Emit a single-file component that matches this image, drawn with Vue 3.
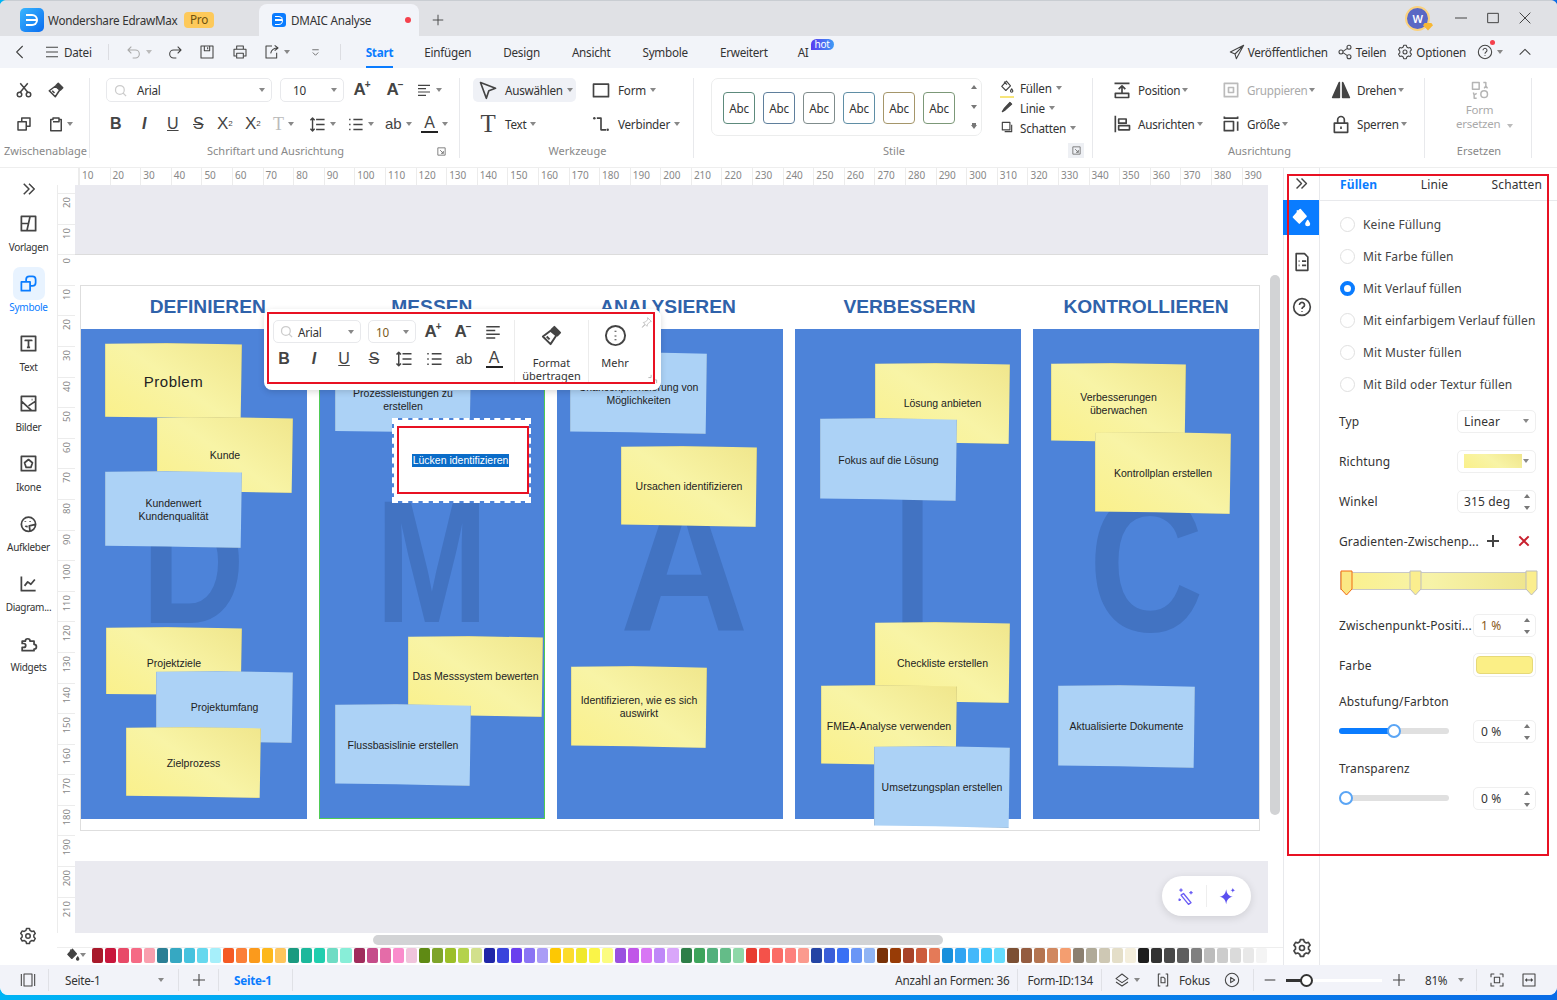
<script setup>
// Pfade für die Icons (viewBox 24x24)
const ic = {
  cut: 'M7 15 17 3M17 15 7 3M3 18a3 3 0 1 0 6 0a3 3 0 1 0-6 0M15 18a3 3 0 1 0 6 0a3 3 0 1 0-6 0',
  copy: 'M4 9h11v11H4zM9 9V4h11v11h-5',
  paste: 'M5 6h3V4h8v2h3v15H5zM8 9h8V6',
  search: 'M4 11a7 7 0 1 0 14 0a7 7 0 1 0-14 0M16 16l5 5',
  align: 'M3 5h18M3 10h12M3 15h18M3 20h12',
  spacing: 'M10 5h12M10 12h12M10 19h12M5 3v18M2 6l3-3 3 3M2 18l3 3 3-3',
  list: 'M9 5h13M9 12h13M9 19h13M3 5h2M3 12h2M3 19h2',
  pointer: 'M3 3l18 7-8 3-3 9z',
  connector: 'M7 5h5v14h6',
  position: 'M3 4h18M12 16V7M8 11l4-4 4 4M4 16h16v5H4z',
  ausrichten: 'M4 2v20M8 6h9v5H8zM8 14h13v5H8z',
  group: 'M4 4h16v16H4zM9 9h6v6H9z',
  size: 'M4 3v2h16V3M4 9h11v11H4zM20 9v11',
  lock: 'M4 11h16v11H4zM8 11V7a4 4 0 0 1 8 0v4M12 15v3',
  send: 'M22 2 2 12l7 3 13-13zM9 15l2 7 11-20',
  share: 'M3 12a3 3 0 1 0 6 0a3 3 0 1 0-6 0M15 5a3 3 0 1 0 6 0a3 3 0 1 0-6 0M15 19a3 3 0 1 0 6 0a3 3 0 1 0-6 0M9 11l6-4M9 13l6 4',
  gear: 'M10 2h4l.7 2.600 2.400 1.400 2.600-.7 2 3.400-1.900 1.900v2.800l1.900 1.900-2 3.400-2.600-.7-2.400 1.400L14 22h-4l-.7-2.600-2.400-1.400-2.600.7-2-3.400 1.900-1.900v-2.800L2.300 8.600l2-3.400 2.600.7 2.400-1.400zM9 12a3 3 0 1 0 6 0a3 3 0 1 0-6 0',
  help: 'M2 12a10 10 0 1 0 20 0a10 10 0 1 0-20 0M9 9.500a3 3 0 1 1 4.500 2.600c-1 .6-1.500 1.200-1.500 2.400M12 17v1',
  brushHead: 'M11 7 3 13l8 8 6-9zM7 13l3 3',
  brushHandle: 'M15 3l6 6-3 3-6-6z',
  more: 'M2 12a10 10 0 1 0 20 0a10 10 0 1 0-20 0M12 7v1M12 12v1M12 16v1',
  double: 'M5 5l7 7-7 7M12 5l7 7-7 7',
  bucket: 'M11 2 3 11l7 7 8-8zM7 3l5 5M20 15c1 2 2 3 2 4a2 2 0 0 1-4 0c0-1 1-2 2-4z',
  doc: 'M5 2h10l4 4v16H5zM8 11h1M12 11h5M8 16h1M12 16h5',
  templates: 'M3 3h18v18H3zM14 3l-4 18M3 12h9',
  symbols: 'M3 10h11v11H3zM9 10V7a4 4 0 0 1 4-4h4a4 4 0 0 1 4 4v4a4 4 0 0 1-4 4h-3',
  textbox: 'M3 3h18v18H3zM8 9V8h8v1M12 8v9M10 17h4',
  image: 'M3 3h18v18H3zM3 9l13 12M12 15l9-6M16 7h1',
  iconbox: 'M3 3h18v18H3zM12 7l5 4-2 6H9l-2-6z',
  sticker: 'M21 13a9 9 0 1 0-9 9c5 0 9-4 9-9zM8 9v1M14 9v1M21 13l-8 2 1 7M8 15c1 1 2 1 3 1',
  chart: 'M3 3v18h18M7 15l4-5 4 3 5-6',
  puzzle: 'M4 9h4a3 3 0 1 1 6 0h5v4a3 3 0 1 1 0 6v2H4v-4h2a2.500 2.500 0 1 0 0-5H4z',
  panel: 'M2 3v18M22 3v18M6 3h12v18H6z',
  layers: 'M12 3l9 7-9 6-9-6zM3 15l9 6 9-6',
  focus: 'M8 3H5v18h3M16 3h3v18h-3M9 8h4l2 2v6H9z',
  play: 'M2 12a10 10 0 1 0 20 0a10 10 0 1 0-20 0M10 8l6 4-6 4z',
  fit: 'M8 3H3v5M16 3h5v5M8 21H3v-5M16 21h5v-5M8 8h8v8H8z',
  fitw: 'M3 3h18v18H3zM7 12h10M9 10l-2 2 2 2M15 10l2 2-2 2',
  undo: 'M8 4 3 9l5 5M3 9h11a6 6 0 0 1 0 12h-4',
  redo: 'M16 4l5 5-5 5M21 9H10a6 6 0 0 0 0 12h4',
  save: 'M3 3h18v18H3zM8 3v7h8V3M13 5v3',
  print: 'M7 8V3h10v5M6 18H3V8h18v10h-3M7 14h10v7H7z',
  exportIc: 'M12 3H3v18h16v-8M10 14c1-5 5-8 11-8M16 2l5 4-5 4',
  qa: 'M5 6h14M6 12l6 6 6-6',
  hamburger: 'M3 5h18M3 12h18M3 19h18',
  wand: 'M9 9l9 11-3 2-9-11zM6 3v4M4 5h4M18 6v4M16 8h4M4 15v3M3 16.500h3',
  replace: 'M3 3h8v8H3zM13 17a4 4 0 1 0 8 0a4 4 0 1 0-8 0M16 3h3v4M17 10l2-3 2 3M8 22H5v-4M4 15l1 3 3-2'
}

const sideItems = [
  { label: 'Vorlagen', icon: 'templates' },
  { label: 'Symbole', icon: 'symbols', active: true },
  { label: 'Text', icon: 'textbox' },
  { label: 'Bilder', icon: 'image' },
  { label: 'Ikone', icon: 'iconbox' },
  { label: 'Aufkleber', icon: 'sticker' },
  { label: 'Diagram...', icon: 'chart' },
  { label: 'Widgets', icon: 'puzzle' }
]

const tabs = ['Start', 'Einfügen', 'Design', 'Ansicht', 'Symbole', 'Erweitert']
const styleBorders = ['#5d8a7c', '#5f7f9c', '#7f8c8c', '#5f8ea5', '#a5966a', '#7c9878']
const rulerH = Array.from({ length: 39 }, (_, i) => (i + 1) * 10)
const rulerV = Array.from({ length: 24 }, (_, i) => Math.abs(i * 10 - 20))

const columns = [
  { title: 'DEFINIEREN', letter: 'D', t: 'translateX(-1px) scaleX(.82)' },
  { title: 'MESSEN', letter: 'M', t: 'scaleX(.77)' },
  { title: 'ANALYSIEREN', letter: 'A', t: 'translate(14px, 8px) scale(1.02, 1.12)' },
  { title: 'VERBESSERN', letter: 'T', t: 'translate(4px, 8px) scale(.8, 1.3)' },
  { title: 'KONTROLLIEREN', letter: 'C', t: 'translateY(8px) scale(.91, 1.12)' }
]

// Koordinaten wie im Fenster, umgerechnet auf die Zeichenfläche (75/185)
const notes = [
  { x: 105, y: 343, r: 242, b: 419, c: 'y', big: true, text: 'Problem' },
  { x: 157, y: 417, r: 293, b: 493, c: 'y', text: 'Kunde' },
  { x: 105, y: 471, r: 242, b: 548, c: 'b', text: 'Kundenwert\nKundenqualität' },
  { x: 106, y: 627, r: 242, b: 696, c: 'y', text: 'Projektziele', pt: 2 },
  { x: 156, y: 671, r: 293, b: 743, c: 'b', text: 'Projektumfang' },
  { x: 126, y: 727, r: 261, b: 798, c: 'y', text: 'Zielprozess', pt: 1 },
  { x: 335, y: 367, r: 471, b: 433, c: 'b', text: 'Prozessleistungen zu\nerstellen' },
  { x: 408, y: 636, r: 543, b: 717, c: 'y', text: 'Das Messsystem bewerten' },
  { x: 335, y: 704, r: 471, b: 786, c: 'b', text: 'Flussbasislinie erstellen' },
  { x: 570, y: 352, r: 707, b: 434, c: 'b', text: 'Chancenpriorisierung von\nMöglichkeiten', pt: 1 },
  { x: 621, y: 446, r: 757, b: 527, c: 'y', text: 'Ursachen identifizieren' },
  { x: 571, y: 666, r: 707, b: 748, c: 'y', text: 'Identifizieren, wie es sich\nauswirkt' },
  { x: 875, y: 363, r: 1010, b: 444, c: 'y', text: 'Lösung anbieten' },
  { x: 820, y: 418, r: 957, b: 501, c: 'b', text: 'Fokus auf die Lösung', pt: 1 },
  { x: 875, y: 622, r: 1010, b: 703, c: 'y', text: 'Checkliste erstellen', pt: 1 },
  { x: 821, y: 685, r: 957, b: 766, c: 'y', text: 'FMEA-Analyse verwenden', pt: 1 },
  { x: 874, y: 746, r: 1010, b: 828, c: 'b', text: 'Umsetzungsplan erstellen' },
  { x: 1051, y: 363, r: 1186, b: 443, c: 'y', text: 'Verbesserungen\nüberwachen', pt: 1 },
  { x: 1095, y: 432, r: 1231, b: 514, c: 'y', text: 'Kontrollplan erstellen' },
  { x: 1058, y: 685, r: 1195, b: 768, c: 'b', text: 'Aktualisierte Dokumente' }
]

const noteStyle = (n) => ({
  left: n.x - 75 + 'px',
  top: n.y - 185 + 'px',
  width: n.r - n.x + 'px',
  height: n.b - n.y + 'px',
  paddingTop: (n.pt || 0) * 2 + 'px'
})

const radios = [
  { label: 'Keine Füllung' },
  { label: 'Mit Farbe füllen' },
  { label: 'Mit Verlauf füllen', on: true },
  { label: 'Mit einfarbigem Verlauf füllen' },
  { label: 'Mit Muster füllen' },
  { label: 'Mit Bild oder Textur füllen' }
]

const swatches = [
  '#a8192a', '#c8163c', '#e84a68', '#f56a85', '#f99fae',
  '#2b7f95', '#36a8c2', '#45c2de', '#66d8ee', '#a6effa',
  '#f55a24', '#fb7f38', '#fb9a1c', '#fdb81c', '#fec55c',
  '#1a9a80', '#1cb89c', '#20ceae', '#6edcc4', '#88eed8',
  '#a02c5c', '#c54c8a', '#e46ca8', '#fa8ccc', '#f0c4dc',
  '#5f8a14', '#7ea42a', '#9cbf28', '#b4d24c', '#d2e08c',
  '#2026a8', '#3a44dc', '#6a40ee', '#8a74f4', '#aa9cf6',
  '#fdc803', '#fcdc2c', '#f0e82c', '#faf448', '#fbfc80',
  '#9a50e0', '#c056e8', '#d876f4', '#bf88f8', '#d9a6fa',
  '#2e7e48', '#3ea45c', '#52b07c', '#64bc88', '#8ed8a8',
  '#e83c30', '#f4524a', '#fb6c66', '#fd807c', '#fb9a8e',
  '#2444a4', '#3a5ed8', '#3a70f4', '#6a96f6', '#90b4f4',
  '#7a3208', '#983c06', '#a84228', '#cc5c3c', '#e47a58',
  '#1890dc', '#30a4f2', '#44b8fa', '#44c8fa', '#64dcfc',
  '#7c5034', '#945c40', '#b47450', '#d08860', '#f49e70',
  '#8c8070', '#b0aa98', '#cec8b4', '#e4dec8', '#f4eedc',
  '#1e1e1e', '#323232', '#484848', '#5e5e5e', '#808080',
  '#bcbcbc', '#cccccc', '#dadada', '#e8e8e8', '#f4f4f4', '#ffffff'
]
</script>

<template>
  <div class="app">
    <!-- Titelleiste -->
    <header class="titlebar">
      <div class="logo"><span class="logo-d"></span></div>
      <span class="app-name">Wondershare EdrawMax</span>
      <span class="pro">Pro</span>
      <div class="doc-tab">
        <div class="tab-logo"><span class="logo-d small"></span></div>
        <span>DMAIC Analyse</span>
        <i class="red-dot"></i>
      </div>
      <svg class="ic plus-tab" viewBox="0 0 24 24"><path d="M12 3v18M3 12h18" /></svg>
      <div class="win">
        <div class="avatar">W<i class="avatar-badge"></i></div>
        <svg class="ic w" viewBox="0 0 24 24"><path d="M3 12h18" /></svg>
        <svg class="ic w" viewBox="0 0 24 24"><path d="M4 5h16v14H4z" /></svg>
        <svg class="ic w" viewBox="0 0 24 24"><path d="M4 4l16 16M20 4 4 20" /></svg>
      </div>
    </header>

    <!-- Menüzeile -->
    <nav class="menubar">
      <svg class="ic m back" viewBox="0 0 24 24"><path d="M16 3 7 12l9 9" /></svg>
      <svg class="ic m ham" viewBox="0 0 24 24"><path :d="ic.hamburger" /></svg>
      <span class="datei">Datei</span>
      <i class="vsep"></i>
      <svg class="ic m off undo" viewBox="0 0 24 24"><path :d="ic.undo" /></svg><i class="caret off"></i>
      <svg class="ic m redo" viewBox="0 0 24 24"><path :d="ic.redo" /></svg>
      <svg class="ic m q" viewBox="0 0 24 24"><path :d="ic.save" /></svg>
      <svg class="ic m q q17" viewBox="0 0 24 24"><path :d="ic.print" /></svg>
      <svg class="ic m q" viewBox="0 0 24 24"><path :d="ic.exportIc" /></svg><i class="caret"></i>
      <svg class="ic m qa" viewBox="0 0 24 24"><path :d="ic.qa" /></svg>
      <i class="vsep two"></i>
      <div class="tabs">
        <span v-for="t in tabs" :key="t" class="tab" :class="{ on: t === 'Start' }">{{ t }}</span>
        <span class="tab ai">AI<b class="hot">hot</b></span>
      </div>
      <div class="menu-right">
        <svg class="ic m" viewBox="0 0 24 24"><path :d="ic.send" /></svg><span class="mr-text">Veröffentlichen</span>
        <svg class="ic m" viewBox="0 0 24 24"><path :d="ic.share" /></svg><span class="mr-text wide">Teilen</span>
        <svg class="ic m" viewBox="0 0 24 24"><path :d="ic.gear" /></svg><span class="mr-text">Optionen</span>
        <span class="help-wrap">
          <svg class="ic m" viewBox="0 0 24 24"><path :d="ic.help" /></svg><i class="help-dot"></i><i class="caret"></i>
        </span>
        <svg class="ic m up" viewBox="0 0 24 24"><path d="M4 16l8-8 8 8" /></svg>
      </div>
    </nav>

    <!-- Ribbon -->
    <section class="ribbon">
      <div class="group g-clip">
        <div class="rows">
          <div class="row">
            <span class="cell"><svg class="ic" viewBox="0 0 24 24"><path :d="ic.cut" /></svg></span>
            <span class="cell"><svg class="ic" viewBox="0 0 24 24"><path :d="ic.brushHead" /><path class="solid" :d="ic.brushHandle" /></svg></span>
          </div>
          <div class="row">
            <span class="cell"><svg class="ic" viewBox="0 0 24 24"><path :d="ic.copy" /></svg></span>
            <span class="cell"><svg class="ic" viewBox="0 0 24 24"><path :d="ic.paste" /></svg><i class="caret abs"></i></span>
          </div>
        </div>
        <div class="gl">Zwischenablage</div>
      </div>

      <div class="group g-font">
        <div class="rows">
          <div class="row r1">
            <div class="sel s-font">
              <svg class="ic search" viewBox="0 0 24 24"><path :d="ic.search" /></svg>
              <span>Arial</span><i class="caret end"></i>
            </div>
            <div class="sel s-size"><span>10</span><i class="caret end"></i></div>
            <span class="gl-a">A<sup>+</sup></span>
            <span class="gl-a">A<sup>−</sup></span>
            <svg class="ic al" viewBox="0 0 24 24"><path :d="ic.align" /></svg><i class="caret"></i>
          </div>
          <div class="row r2">
            <span class="g b">B</span>
            <span class="g i">I</span>
            <span class="g u">U</span>
            <span class="g s">S</span>
            <span class="g x">X<sup>2</sup></span>
            <span class="g x">X<sub>2</sub></span>
            <span class="g tt">T<i class="caret"></i></span>
            <span class="g sp"><svg class="ic" viewBox="0 0 24 24"><path :d="ic.spacing" /></svg><i class="caret"></i></span>
            <span class="g sp2"><svg class="ic" viewBox="0 0 24 24"><path :d="ic.list" /></svg><i class="caret"></i></span>
            <span class="g ab">ab<i class="caret"></i></span>
            <span class="g ca"><span class="ca-a">A</span><i class="caret"></i></span>
          </div>
        </div>
        <div class="gl">Schriftart und Ausrichtung</div>
        <span class="launch"><svg class="ic" viewBox="0 0 24 24"><path d="M4 4h16v16M4 4v16h16M9 9l7 7M16 11v5h-5" /></svg></span>
      </div>

      <div class="group g-tools">
        <div class="rows">
          <div class="row">
            <div class="tool active">
              <svg class="ic lg" viewBox="0 0 24 24"><path :d="ic.pointer" /></svg>
              <span>Auswählen</span><i class="caret"></i>
            </div>
            <div class="tool second">
              <svg class="ic lg" viewBox="0 0 24 24"><path d="M3 5h18v15H3z" /></svg>
              <span>Form</span><i class="caret"></i>
            </div>
          </div>
          <div class="row">
            <div class="tool">
              <span class="big-t">T</span>
              <span>Text</span><i class="caret"></i>
            </div>
            <div class="tool second">
              <svg class="ic lg" viewBox="0 0 24 24"><path :d="ic.connector" /><circle cx="4" cy="5" r="1.500" class="dot" /><circle cx="20" cy="19" r="1.500" class="dot" /></svg>
              <span>Verbinder</span><i class="caret"></i>
            </div>
          </div>
        </div>
        <div class="gl">Werkzeuge</div>
      </div>

      <div class="group g-styles">
        <div class="style-box">
          <span v-for="c in styleBorders" :key="c" class="abc" :style="{ borderColor: c }">Abc</span>
          <div class="style-arrows">
            <i class="tri up-tri"></i><i class="tri"></i><i class="tri more-tri"></i>
          </div>
        </div>
        <div class="fill-col">
          <div class="fill-row">
            <span class="fill-ic"><svg class="ic sm" viewBox="0 0 24 24"><path :d="ic.bucket" /></svg><i class="ybar"></i></span>
            <span>Füllen</span><i class="caret"></i>
          </div>
          <div class="fill-row">
            <span class="fill-ic"><svg class="ic sm" viewBox="0 0 24 24"><path class="solid" d="M4 20l3-5 10-11 3 3L9 17z" /></svg></span>
            <span>Linie</span><i class="caret"></i>
          </div>
          <div class="fill-row">
            <span class="fill-ic"><svg class="ic sm" viewBox="0 0 24 24"><path d="M4 4h13v13H4zM20 8v12H8" /></svg></span>
            <span>Schatten</span><i class="caret"></i>
          </div>
        </div>
        <div class="gl">Stile</div>
        <span class="launch boxed"><svg class="ic" viewBox="0 0 24 24"><path d="M4 4h16v16M4 4v16h16M9 9l7 7M16 11v5h-5" /></svg></span>
      </div>

      <div class="group g-align">
        <div class="rows">
          <div class="row">
            <div class="a-item a1"><svg class="ic lg" viewBox="0 0 24 24"><path :d="ic.position" /></svg><span>Position</span><i class="caret"></i></div>
            <div class="a-item a2 dis"><svg class="ic lg" viewBox="0 0 24 24"><path :d="ic.group" /></svg><span>Gruppieren</span><i class="caret"></i></div>
            <div class="a-item a3"><svg class="ic lg" viewBox="0 0 24 24"><path class="solid" d="M10 3v18H2zM14 3l8 18h-8z" /></svg><span>Drehen</span><i class="caret"></i></div>
          </div>
          <div class="row">
            <div class="a-item a1"><svg class="ic lg" viewBox="0 0 24 24"><path :d="ic.ausrichten" /></svg><span>Ausrichten</span><i class="caret"></i></div>
            <div class="a-item a2"><svg class="ic lg" viewBox="0 0 24 24"><path :d="ic.size" /></svg><span>Größe</span><i class="caret"></i></div>
            <div class="a-item a3"><svg class="ic lg" viewBox="0 0 24 24"><path :d="ic.lock" /></svg><span>Sperren</span><i class="caret"></i></div>
          </div>
        </div>
        <div class="gl">Ausrichtung</div>
      </div>

      <div class="group g-replace">
        <div class="replace">
          <svg class="ic lg" viewBox="0 0 24 24"><path :d="ic.replace" /></svg>
          <span>Form</span>
          <span class="rep2">ersetzen <i class="caret off"></i></span>
        </div>
        <div class="gl">Ersetzen</div>
      </div>
    </section>

    <main class="main">
      <!-- linke Leiste -->
      <aside class="side">
        <svg class="ic expand" viewBox="0 0 24 24"><path :d="ic.double" /></svg>
        <div v-for="s in sideItems" :key="s.label" class="side-item" :class="{ on: s.active }">
          <span class="side-ic"><svg class="ic" viewBox="0 0 24 24"><path :d="ic[s.icon]" /></svg></span>
          <span class="side-label">{{ s.label }}</span>
        </div>
        <svg class="ic side-gear" viewBox="0 0 24 24"><path :d="ic.gear" /></svg>
      </aside>

      <div class="work">
        <div class="ruler-h">
          <span class="corner"></span>
          <span v-for="v in rulerH" :key="v" class="tick-h">{{ v }}</span>
        </div>
        <div class="work-mid">
          <div class="ruler-v">
            <span v-for="(v, i) in rulerV" :key="i" class="tick-v"><em>{{ v }}</em></span>
          </div>
          <div class="canvas">
            <div class="page">
              <div class="frame">
                <div v-for="c in columns" :key="c.title" class="col">
                  <h2>{{ c.title }}</h2>
                  <div class="col-body" :class="{ picked: c.letter === 'M' }">
                    <span class="letter" :style="{ transform: c.t }">{{ c.letter }}</span>
                  </div>
                </div>
              </div>
            </div>

            <div
              v-for="n in notes"
              :key="n.text"
              class="note"
              :class="[n.c === 'y' ? 'yellow' : 'blue', { big: n.big }]"
              :style="noteStyle(n)"
            >{{ n.text }}</div>

            <!-- Textfeld in Bearbeitung -->
            <div class="editor">
              <div class="editor-in"><mark>Lücken identifizieren</mark></div>
            </div>

            <!-- schwebende Formatleiste -->
            <div class="popup">
              <div class="pop-main">
                <div class="pop-row">
                  <div class="sel p-font">
                    <svg class="ic search" viewBox="0 0 24 24"><path :d="ic.search" /></svg>
                    <span>Arial</span><i class="caret end"></i>
                  </div>
                  <div class="sel p-size"><span>10</span><i class="caret end"></i></div>
                  <span class="gl-a p">A<sup>+</sup></span>
                  <span class="gl-a p">A<sup>−</sup></span>
                  <span class="pc"><svg class="ic" viewBox="0 0 24 24"><path :d="ic.align" /></svg></span>
                </div>
                <div class="pop-row two">
                  <span class="pc g b">B</span>
                  <span class="pc g i">I</span>
                  <span class="pc g u">U</span>
                  <span class="pc g s">S</span>
                  <span class="pc"><svg class="ic" viewBox="0 0 24 24"><path :d="ic.spacing" /></svg></span>
                  <span class="pc"><svg class="ic" viewBox="0 0 24 24"><path :d="ic.list" /></svg></span>
                  <span class="pc g ab">ab</span>
                  <span class="pc g ca"><span class="ca-a">A</span></span>
                </div>
              </div>
              <div class="pop-big fmt">
                <svg class="ic lg" viewBox="0 0 24 24"><path :d="ic.brushHead" /><path class="solid" :d="ic.brushHandle" /></svg>
                <span>Format<br />übertragen</span>
              </div>
              <div class="pop-big mehr">
                <svg class="ic lg" viewBox="0 0 24 24"><path :d="ic.more" /></svg>
                <span>Mehr</span>
              </div>
              <svg class="ic pin" viewBox="0 0 24 24"><path d="M14 3l7 7-3 1-4 4-1 4-3-3-6 5 5-6-3-3 4-1 4-4z" /></svg>
              <svg class="ic grip" viewBox="0 0 24 24"><path d="M3 10h6V4M21 22v-7h-6" /></svg>
              <div class="red-frame"></div>
            </div>

            <div class="ai-pill">
              <svg class="ic pill-ic" viewBox="0 0 24 24"><path :d="ic.wand" /></svg>
              <i></i>
              <svg class="ic pill-ic solid-ic" viewBox="0 0 24 24"><path d="M11 4c1 6 3 8 8 9-5 1-7 3-8 9-1-6-3-8-8-9 5-1 7-3 8-9zM19 2c.3 2 1 2.700 3 3-2 .3-2.700 1-3 3-.3-2-1-2.700-3-3 2-.3 2.700-1 3-3z" /></svg>
            </div>
          </div>
          <div class="vscroll"><i></i></div>
        </div>
        <div class="hscroll"><i></i></div>
        <div class="palette">
          <span class="pal-ic"><svg class="ic" viewBox="0 0 24 24"><path class="solid" :d="ic.bucket" /></svg><i class="caret"></i></span>
          <i v-for="(c, i) in swatches" :key="i" class="sw" :style="{ background: c }"></i>
        </div>
      </div>

      <!-- rechte Leiste -->
      <aside class="right">
        <div class="strip">
          <svg class="ic expand2" viewBox="0 0 24 24"><path :d="ic.double" /></svg>
          <span class="strip-on"><svg class="ic lg" viewBox="0 0 24 24"><path class="solid" :d="ic.bucket" /></svg></span>
          <svg class="ic lg strip-ic" viewBox="0 0 24 24"><path :d="ic.doc" /></svg>
          <svg class="ic lg strip-ic two" viewBox="0 0 24 24"><path :d="ic.help" /></svg>
          <svg class="ic lg strip-gear" viewBox="0 0 24 24"><path :d="ic.gear" /></svg>
        </div>
        <div class="props">
          <div class="prop-tabs">
            <span class="on">Füllen</span><span>Linie</span><span>Schatten</span>
          </div>
          <div class="radios">
            <label v-for="r in radios" :key="r.label" class="radio">
              <i :class="{ on: r.on }"></i>{{ r.label }}
            </label>
          </div>
          <div class="prow"><span>Typ</span>
            <div class="box b-wide"><span>Linear</span><i class="caret end"></i></div>
          </div>
          <div class="prow"><span>Richtung</span>
            <div class="box b-wide"><i class="grad-chip"></i><i class="caret end"></i></div>
          </div>
          <div class="prow"><span>Winkel</span>
            <div class="box b-wide"><span>315 deg</span><i class="spin"></i></div>
          </div>
          <div class="prow"><span>Gradienten-Zwischenp...</span>
            <div class="stop-btns">
              <svg class="ic add" viewBox="0 0 24 24"><path d="M12 3v18M3 12h18" /></svg>
              <svg class="ic del" viewBox="0 0 24 24"><path d="M5 5l14 14M19 5 5 19" /></svg>
            </div>
          </div>
          <div class="gradbar">
            <svg class="stop s0" viewBox="0 0 13 27"><path d="M1 1h11v18l-5.500 6L1 19z" /></svg>
            <svg class="stop s1" viewBox="0 0 13 27"><path d="M1 1h11v18l-5.500 6L1 19z" /></svg>
            <svg class="stop s2" viewBox="0 0 13 27"><path d="M1 1h11v18l-5.500 6L1 19z" /></svg>
          </div>
          <div class="prow"><span>Zwischenpunkt-Positi...</span>
            <div class="box b-num"><span class="orange">1 %</span><i class="spin"></i></div>
          </div>
          <div class="prow"><span>Farbe</span>
            <div class="box b-num pad"><i class="farbe"></i></div>
          </div>
          <div class="plabel first">Abstufung/Farbton</div>
          <div class="prow short">
            <div class="slider"><i class="done"></i><i class="knob"></i></div>
            <div class="box b-num"><span>0 %</span><i class="spin"></i></div>
          </div>
          <div class="plabel">Transparenz</div>
          <div class="prow short">
            <div class="slider zero"><i class="knob"></i></div>
            <div class="box b-num"><span>0 %</span><i class="spin"></i></div>
          </div>
        </div>
        <div class="red-panel"></div>
      </aside>
    </main>

    <!-- Statusleiste -->
    <footer class="status">
      <span class="st st-panel"><svg class="ic" viewBox="0 0 24 24"><path :d="ic.panel" /></svg></span>
      <span class="st st-page">Seite-1<i class="caret"></i></span>
      <span class="st st-add"><svg class="ic" viewBox="0 0 24 24"><path d="M12 3v18M3 12h18" /></svg></span>
      <span class="st st-cur">Seite-1</span>
      <div class="st-right">
        <span class="st st-t">Anzahl an Formen: 36</span>
        <span class="st st-t">Form-ID:134</span>
        <span class="st st-focus">
          <svg class="ic" viewBox="0 0 24 24"><path :d="ic.layers" /></svg><i class="caret"></i>
          <svg class="ic fo" viewBox="0 0 24 24"><path :d="ic.focus" /></svg>
          <span>Fokus</span>
          <svg class="ic pl" viewBox="0 0 24 24"><path :d="ic.play" /></svg>
        </span>
        <span class="st st-zoom">
          <svg class="ic" viewBox="0 0 24 24"><path d="M4 12h16" /></svg>
          <span class="zoom-track"><i class="zt"></i><i class="zk"></i></span>
          <svg class="ic" viewBox="0 0 24 24"><path d="M12 3v18M3 12h18" /></svg>
          <span class="pct">81%</span><i class="caret"></i>
        </span>
        <span class="st st-fit">
          <svg class="ic" viewBox="0 0 24 24"><path :d="ic.fit" /></svg>
          <svg class="ic" viewBox="0 0 24 24"><path :d="ic.fitw" /></svg>
        </span>
      </div>
    </footer>
  </div>
</template>

<style>
html, body {
  margin: 0;
  height: 1000px;
  overflow: hidden;
  background: linear-gradient(90deg, #00b4f5, #0a6ce6);
}
</style>

<style scoped>
* { box-sizing: border-box; }
i { font-style: normal; display: inline-block; }

.app {
  width: 1557px;
  height: 995px;
  display: flex;
  flex-direction: column;
  background: #fff;
  color: #333;
  font: 11.700px "Noto Sans", "Open Sans", sans-serif;
  letter-spacing: -.25px;
  border-radius: 6px 6px 8px 8px;
  overflow: hidden;
  border-top: 1px solid #c9cdd2;
}

.ic {
  width: 18px;
  height: 18px;
  flex: none;
  fill: none;
  stroke: #444;
  stroke-width: 2;
  stroke-linejoin: round;
}
.ic.lg { width: 20px; height: 20px; }
.ic.sm { width: 14px; height: 14px; }
.ic.off { stroke: #aaa; }
.solid { fill: #444; }
.dot { fill: #444; stroke: none; }

.caret {
  width: 0;
  height: 0;
  flex: none;
  border: 3px solid transparent;
  border-top: 4px solid #888;
  border-bottom: 0;
  margin-left: 4px;
}
.caret.off { border-top-color: #bbb; }
.caret.end { margin-left: auto; margin-right: 6px; }

/* Titelleiste */
.titlebar {
  height: 35px;
  flex: none;
  display: flex;
  align-items: center;
  background: #e0e1e5;
  padding-top: 3px;
}
.logo {
  width: 24px;
  height: 24px;
  margin-left: 20px;
  border-radius: 5px;
  background: linear-gradient(135deg, #38b6ff, #0a6cf0);
  display: flex;
  align-items: center;
  justify-content: center;
}
.logo-d {
  width: 12px;
  height: 12px;
  border: 2px solid #fff;
  border-left: 0;
  border-radius: 0 6px 6px 0;
  background: linear-gradient(#fff, #fff) center / 100% 2px no-repeat;
}
.logo-d.small { width: 8px; height: 9px; border-width: 1.500px; }
.app-name { margin-left: 4px; width: 127px; white-space: nowrap; color: #333; }
.pro {
  margin-left: 9px;
  width: 30px;
  height: 16px;
  line-height: 15px;
  text-align: center;
  border-radius: 4px;
  background: #fdc95a;
  color: #6d5210;
}
.doc-tab {
  align-self: flex-end;
  margin-left: 45px;
  width: 160px;
  height: 32px;
  background: #f2f4f9;
  border-radius: 8px 8px 0 0;
  display: flex;
  align-items: center;
  padding-left: 13px;
  gap: 5px;
}
.tab-logo {
  width: 14px;
  height: 14px;
  border-radius: 3px;
  background: #0a7cff;
  display: flex;
  align-items: center;
  justify-content: center;
}
.red-dot {
  width: 6px;
  height: 6px;
  border-radius: 50%;
  background: #f5414c;
  margin-left: 29px;
}
.plus-tab { margin-left: 12px; width: 14px; height: 14px; stroke-width: 1.600; }
.win {
  margin-left: auto;
  margin-bottom: 4px;
  display: flex;
  align-items: center;
  padding-right: 24px;
  gap: 16px;
}
.avatar {
  width: 25px;
  height: 25px;
  border-radius: 50%;
  background: #5a68c4;
  border: 2px solid #fbd27e;
  color: #fff;
  font-size: 11px;
  font-weight: 600;
  text-align: center;
  line-height: 21px;
  position: relative;
  margin-right: 7px;
}
.avatar-badge {
  position: absolute;
  right: -5px;
  bottom: -2px;
  width: 10px;
  height: 8px;
  background: #f7b733;
  clip-path: polygon(20% 0, 80% 0, 100% 35%, 50% 100%, 0 35%);
}
.ic.w { width: 16px; height: 16px; stroke-width: 1.500; }

/* Menü */
.menubar {
  height: 32px;
  flex: none;
  display: flex;
  align-items: center;
  background: #f2f4f9;
}
.ic.m { width: 16px; height: 16px; stroke-width: 1.600; }
.back { margin-left: 12px; }
.ham { margin-left: 16px; }
.datei { margin-left: 4px; }
.vsep { width: 1px; height: 16px; background: #dcdde2; margin-left: 16px; }
.undo { margin-left: 17px; }
.redo { margin-left: 15px; }
.q { margin-left: 16px; }
.q17 { margin-left: 17px; }
.ic.m.qa { margin-left: 20px; width: 11px; height: 11px; }
.vsep.two { margin-left: 19px; }
.tabs { margin-left: 25px; display: flex; gap: 32px; height: 100%; }
.tab { position: relative; line-height: 32px; height: 100%; color: #333; }
.tab.on {
  font-weight: 700;
  color: #0a7cff;
  box-shadow: inset 0 -2px 0 #0a7cff;
  margin-right: -1px;
}
.tab.ai { margin-left: -2px; }
.hot {
  position: absolute;
  left: 13px;
  top: 3px;
  width: 23px;
  height: 11px;
  border-radius: 6px 6px 6px 0;
  background: linear-gradient(90deg, #5a3cf0, #3f9bf5);
  color: #fff;
  font: 10px/10px "Noto Sans", sans-serif;
  text-align: center;
}
.menu-right { margin-left: auto; display: flex; align-items: center; padding-right: 24px; }
.mr-text { margin: 0 9px 0 3px; white-space: nowrap; }
.mr-text.wide { margin-right: 11px; }
.help-wrap { display: flex; align-items: center; position: relative; margin-left: 2px; }
.help-dot {
  position: absolute;
  left: 13px;
  top: -4px;
  width: 5px;
  height: 5px;
  border-radius: 50%;
  background: #f5414c;
}
.up { margin-left: 14px; }

/* Ribbon */
.ribbon {
  height: 100px;
  flex: none;
  display: flex;
  padding-top: 10px;
  border-bottom: 1px solid #eee;
}
.group {
  position: relative;
  height: 80px;
  border-right: 1px solid #e8e9ec;
  flex: none;
}
.rows { display: flex; flex-direction: column; gap: 10px; }
.row { display: flex; align-items: center; height: 24px; }
.gl {
  position: absolute;
  left: 2px;
  right: 0;
  bottom: 0;
  text-align: center;
  color: #888;
  font-size: 11px;
  letter-spacing: 0;
  line-height: 14px;
  white-space: nowrap;
}
.g-clip { width: 90px; }
.g-clip .row { padding-left: 15px; gap: 14px; }
.cell { position: relative; display: flex; width: 18px; }
.caret.abs { position: absolute; left: 20px; top: 7px; margin: 0; }

.g-font { width: 370px; padding-left: 16px; }
.sel {
  display: flex;
  align-items: center;
  height: 24px;
  border: 1px solid #e8e9ec;
  border-radius: 5px;
  background: #fff;
}
.s-font { width: 166px; padding-left: 6px; }
.s-size { width: 64px; margin-left: 8px; padding-left: 12px; }
.search { width: 15px; height: 15px; stroke: #ccc; margin-right: 9px; }
.gl-a {
  width: 18px;
  margin-left: 9px;
  font: 600 17px/20px "Liberation Sans", sans-serif;
  letter-spacing: 0;
  color: #444;
  text-align: center;
  white-space: nowrap;
}
.s-size + .gl-a { margin-left: 9px; }
.gl-a + .gl-a { margin-left: 15px; }
.gl-a sup { font-size: 10px; line-height: 0; vertical-align: 7px; font-weight: 700; margin-left: -1px; }
.ic.al { margin-left: 12px; width: 16px; height: 16px; stroke-width: 1.800; }

.g {
  display: inline-flex;
  align-items: center;
  color: #444;
  font-family: "Liberation Sans", sans-serif;
  font-size: 16px;
  letter-spacing: 0;
  line-height: 20px;
  white-space: nowrap;
}
.g .ic { width: 17px; height: 17px; }
.r2 { padding-left: 2px; }
.r2 .g { justify-content: flex-start; }
.b { font-weight: 700; width: 28px; padding-left: 2px; }
.i { font-style: italic; width: 26px; font-weight: 700; padding-left: 6px; }
.u { text-decoration: underline; width: 27px; padding-left: 5px; }
.s { text-decoration: line-through; width: 28px; padding-left: 4px; }
.x { width: 28px; font-size: 17px; }
.x sup, .x sub { font-size: 8px; line-height: 0; }
.tt { width: 36px; color: #bbb; font-family: "Liberation Serif", serif; font-size: 18px; }
.sp { width: 38px; }
.sp2 { width: 38px; }
.ab { width: 36px; font-size: 15px; }
.ca { width: 30px; }
.ca-a {
  display: block;
  width: 17px;
  text-align: center;
  line-height: 16px;
  border-bottom: 2px solid #222;
}
.launch {
  position: absolute;
  right: 11px;
  bottom: 0;
  width: 14px;
  height: 14px;
  display: flex;
  align-items: center;
  justify-content: center;
}
.launch .ic { width: 11px; height: 11px; stroke-width: 2; stroke: #777; }

.g-tools { width: 234px; padding-left: 13px; }
.tool { width: 103px; height: 24px; display: flex; align-items: center; padding-left: 5px; border-radius: 5px; }
.tool.active { background: #eff1f6; }
.tool.second { width: auto; margin-left: 13px; padding-left: 2px; }
.tool .ic { margin-right: 7px; }
.big-t {
  width: 20px;
  margin-right: 7px;
  font: 25px/24px "Liberation Serif", serif;
  color: #444;
  text-align: center;
}

.g-styles { width: 399px; }
.style-box {
  position: absolute;
  left: 17px;
  top: 0;
  width: 271px;
  height: 58px;
  border: 1px solid #eceded;
  border-radius: 7px;
  display: flex;
  align-items: center;
  padding: 1px 0 0 11px;
  gap: 8px;
}
.abc {
  width: 32px;
  height: 32px;
  border: 1px solid;
  border-radius: 4px;
  text-align: center;
  line-height: 30px;
  color: #333;
}
.style-arrows {
  position: absolute;
  right: 4px;
  top: 6px;
  bottom: 6px;
  display: flex;
  flex-direction: column;
  justify-content: space-between;
  align-items: center;
}
.tri {
  width: 0;
  height: 0;
  border: 3px solid transparent;
  border-top: 4px solid #777;
  border-bottom: 0;
}
.tri.up-tri { border-top: 0; border-bottom: 4px solid #777; }
.tri.more-tri { box-shadow: 0 -3px 0 -1px #777; }
.fill-col {
  position: absolute;
  left: 306px;
  top: 0;
  width: 90px;
}
.fill-row { display: flex; align-items: center; height: 20px; }
.fill-ic { width: 20px; position: relative; }
.ybar { position: absolute; left: 0; bottom: -1px; width: 14px; height: 2px; background: #f7e57a; }
.launch.boxed { right: 8px; bottom: 0; width: 16px; height: 15px; background: #eef0f4; }

.g-align { width: 332px; }
.a-item { display: flex; align-items: center; white-space: nowrap; }
.a-item .caret { margin-left: 2px; }
.a-item .ic { margin-right: 6px; }
.a1 { width: 128px; padding-left: 19px; }
.a2 { width: 110px; }
.a3 { padding-left: 0; }
.dis { color: #aaa; }
.dis .ic { stroke: #bbb; }

.g-replace { width: 107px; padding-left: 3px; }
.replace {
  display: flex;
  flex-direction: column;
  align-items: center;
  color: #aaa;
  line-height: 14px;
  font-size: 11.500px;
}
.replace .ic { stroke: #b5b5b5; margin: 2px 0 3px; stroke-width: 1.800; }
.rep2 { padding-left: 10px; }

/* Hauptbereich */
.main { flex: 1; display: flex; min-height: 0; }
.side {
  width: 57px;
  flex: none;
  display: flex;
  flex-direction: column;
  align-items: center;
  position: relative;
  background: #fff;
}
.expand { margin-top: 12px; margin-bottom: 9px; }
.side-item { height: 60px; display: flex; flex-direction: column; align-items: center; width: 100%; }
.side-ic {
  width: 32px;
  height: 33px;
  display: flex;
  align-items: center;
  justify-content: center;
  border-radius: 7px;
}
.side-ic .ic { width: 19px; height: 19px; stroke-width: 2.200; }
.side-label { font-size: 10px; line-height: 14px; margin-top: 0; color: #333; white-space: nowrap; letter-spacing: -.3px; }
.side-item.on .side-ic { background: #e8f3ff; }
.side-item.on .ic { stroke: #0a7cff; }
.side-item.on .side-label { color: #0a7cff; }
.side-gear { position: absolute; left: 19px; top: 759px; }

.work { width: 1226px; flex: none; display: flex; flex-direction: column; }
.ruler-h {
  height: 17px;
  flex: none;
  display: flex;
  overflow: hidden;
  background: #fff;
  color: #888;
  font-size: 10px;
  letter-spacing: 0;
  line-height: 15px;
}
.corner { width: 22px; flex: none; border-right: 1px solid #ececec; }
.tick-h { width: 30.600px; flex: none; border-left: 1px solid #ececec; padding-left: 2px; }
.work-mid { height: 748px; flex: none; display: flex; }
.ruler-v {
  width: 18px;
  flex: none;
  overflow: hidden;
  border-left: 1px solid #ececec;
  padding-top: 8px;
  color: #888;
}
.tick-v {
  display: block;
  height: 30.600px;
  border-top: 1px solid #ececec;
  position: relative;
}
.tick-v em {
  font-style: normal;
  font-size: 9.500px;
  letter-spacing: 0;
  position: absolute;
  left: 2px;
  top: 3px;
  writing-mode: vertical-rl;
  transform: rotate(180deg);
}
.canvas {
  position: relative;
  width: 1193px;
  flex: none;
  background: #eaeaf0;
  overflow: hidden;
}
.page {
  margin-top: 69px;
  height: 607px;
  background: #fff;
  border-top: 1px solid #dcdcdc;
  padding: 30px 9px 0 5px;
}
.frame {
  width: 1180px;
  height: 546px;
  border: 1px solid #dedede;
  display: grid;
  grid-template-columns: repeat(5, 225.500px);
  column-gap: 12.600px;
}
.col { min-width: 0; }
.col h2 {
  margin: 0;
  height: 43px;
  text-align: center;
  font: bold 19.200px/41px "Liberation Sans", sans-serif;
  letter-spacing: 0;
  color: #2f62aa;
}
.col:nth-child(1) h2 { padding-left: 28px; }
.col:nth-child(3) h2 { padding-right: 4px; }
.col:nth-child(4) h2 { padding-left: 3px; }
.col-body {
  height: 490px;
  background: #4d83d9;
  display: flex;
  justify-content: center;
  align-items: flex-end;
  padding-bottom: 169px;
  overflow: hidden;
}
.col-body.picked { border: 1px solid #4fcb55; border-top: 0; }
.letter {
  font: bold 175px/175px "Liberation Sans", sans-serif;
  color: #4273c2;
  transform-origin: 50% 85%;
}
.note {
  position: absolute;
  display: flex;
  align-items: center;
  justify-content: center;
  text-align: center;
  white-space: pre-line;
  font: 10.500px/13px "Liberation Sans", sans-serif;
  letter-spacing: 0;
  color: #222;
  clip-path: polygon(0 1%, 45% 0, 100% 2%, 99.500% 50%, 99% 100%, 45% 98%, 0 97%);
  box-shadow: inset 0 0 0 1px rgba(60, 60, 60, .1);
}
.note.big { font-size: 15px; letter-spacing: .5px; }
.yellow { background: linear-gradient(35deg, #faf08a 0%, #f8f4a6 50%, #f0e68c 100%); }
.blue { background: #acd2f6; }

.editor {
  position: absolute;
  left: 317px;
  top: 233px;
  width: 139px;
  height: 85px;
  border: 2px dashed #fff;
  background: linear-gradient(#fff, #fff) padding-box, #4d83d9 border-box;
  padding: 6px 0 0 3px;
}
.editor-in {
  width: 132px;
  height: 68px;
  border: 2px solid #e81123;
  display: flex;
  align-items: center;
  justify-content: center;
  padding-right: 5px;
  font: 10.500px/13px "Liberation Sans", sans-serif;
  letter-spacing: 0;
}
.editor mark { background: #0a6cc8; color: #fff; padding: 0 1px; }

.popup {
  position: absolute;
  left: 189px;
  top: 124px;
  width: 397px;
  height: 81px;
  background: #fff;
  border-radius: 8px;
  box-shadow: 0 2px 6px rgba(0, 0, 0, .15);
  display: flex;
  padding: 11px 0 0 9px;
}
.pop-main { width: 241px; }
.pop-row { display: flex; align-items: center; height: 23px; }
.pop-row.two { margin: 4px 0 0 -4px; }
.p-font { width: 88px; padding-left: 5px; height: 23px; }
.p-font .search { margin-right: 4px; }
.p-size { width: 48px; height: 23px; margin-left: 7px; padding-left: 7px; color: #7a5a20; }
.gl-a.p { margin-left: 8px; }
.gl-a.p + .gl-a.p { margin-left: 12px; }
.pc {
  width: 30px;
  flex: none;
  display: flex;
  align-items: center;
  justify-content: center;
  padding: 0;
}
.gl-a.p + .pc { margin-left: 6px; }
.pop-big {
  display: flex;
  flex-direction: column;
  align-items: center;
  border-left: 1px solid #ececec;
  height: 64px;
  text-align: center;
  line-height: 13px;
  font-size: 11px;
  letter-spacing: 0;
  color: #333;
}
.pop-big .ic { margin: 4px 0 9px; width: 23px; height: 23px; }
.fmt { width: 74px; }
.mehr { width: 53px; }
.pin {
  position: absolute;
  right: 8px;
  top: 7px;
  width: 13px;
  height: 13px;
  stroke: #bbb;
  stroke-width: 1.500;
}
.grip { position: absolute; right: 3px; bottom: 6px; width: 11px; height: 11px; stroke: #999; stroke-width: 1.500; }
.red-frame {
  position: absolute;
  left: 3px;
  top: 3px;
  width: 388px;
  height: 72px;
  border: 2px solid #e81123;
  pointer-events: none;
}
.ai-pill {
  position: absolute;
  left: 1087px;
  top: 691px;
  width: 89px;
  height: 40px;
  background: #fff;
  border-radius: 20px;
  box-shadow: 0 2px 8px rgba(0, 0, 0, .12);
  display: flex;
  align-items: center;
  justify-content: center;
  gap: 10px;
}
.ai-pill i { width: 1px; height: 22px; background: #eee; }
.pill-ic { stroke: #6a5cf5; stroke-width: 1.600; width: 20px; height: 20px; }
.solid-ic { fill: #5b50f0; stroke: none; }

.vscroll { width: 15px; flex: none; padding: 90px 0 0 2px; background: #fff; }
.vscroll i { width: 10px; height: 540px; border-radius: 5px; background: #d2d3d5; display: block; }
.hscroll { height: 15px; flex: none; background: #fff; padding: 2px 0 0 316px; border-bottom: 1px solid #eee; }
.hscroll i { display: block; width: 570px; height: 10px; border-radius: 5px; background: #d2d3d5; }
.palette {
  height: 17px;
  flex: none;
  display: flex;
  align-items: flex-start;
  gap: 2px;
  padding-left: 9px;
  overflow: hidden;
}
.pal-ic { width: 24px; display: flex; align-items: center; flex: none; }
.pal-ic .ic { width: 14px; height: 14px; }
.pal-ic .caret { margin-left: 0; }
.sw { width: 11.080px; height: 15px; border-radius: 2px; flex: none; }

/* rechte Leiste */
.right { position: relative; flex: 1; display: flex; min-width: 0; border-left: 1px solid #e8e9ec; }
.strip {
  width: 36px;
  flex: none;
  border-right: 1px solid #e8e9ec;
  display: flex;
  flex-direction: column;
  align-items: center;
  position: relative;
}
.expand2 { margin-top: 7px; height: 17px; width: 17px; }
.strip-on {
  width: 36px;
  height: 35px;
  margin: 8px 0 0 -1px;
  background: #0a7cff;
  display: flex;
  align-items: center;
  justify-content: center;
}
.strip-on .ic { stroke: #fff; }
.strip-on .solid { fill: #fff; }
.strip-ic { margin-top: 17px; }
.strip-ic.two { margin-top: 25px; }
.strip-gear { position: absolute; left: 8px; top: 770px; }
.props { flex: 1; min-width: 0; padding: 0 21px 0 19px; font-size: 12px; letter-spacing: .13px; color: #333; }
.prop-tabs {
  height: 33px;
  margin: 0 -21px 0 -19px;
  padding: 1px 15px 0 20px;
  display: flex;
  justify-content: space-between;
  align-items: center;
  border-bottom: 1px solid #e8e9ec;
}
.prop-tabs .on { color: #0a7cff; font-weight: 700; }
.radios { padding: 7px 0 1px; }
.radio { display: flex; align-items: center; height: 32px; white-space: nowrap; color: #444; }
.radio i {
  width: 15px;
  height: 15px;
  flex: none;
  border: 1px solid #e0e0e0;
  border-radius: 50%;
  margin: 0 8px 0 1px;
}
.radio i.on { border: 4px solid #0a7cff; }
.prow { height: 40px; display: flex; align-items: center; justify-content: space-between; white-space: nowrap; }
.prow.short { height: 34px; }
.box {
  height: 23px;
  border: 1px solid #efefef;
  border-radius: 5px;
  display: flex;
  align-items: center;
  padding-left: 6px;
  position: relative;
  flex: none;
}
.b-wide { width: 79px; }
.b-num { width: 63px; padding-left: 7px; }
.b-num.pad { padding: 2px; height: 24px; }
.orange { color: #8a5a20; }
.grad-chip { width: 58px; height: 14px; background: linear-gradient(35deg, #faf08a, #f8f4a6 50%, #f0e68c); }
.spin { position: absolute; right: 3px; top: 3px; width: 9px; height: 16px; }
.spin::before, .spin::after {
  content: "";
  position: absolute;
  left: 1px;
  border: 3.500px solid transparent;
}
.spin::before { top: 0; border-bottom: 4px solid #777; border-top: 0; }
.spin::after { bottom: 0; border-top: 4px solid #777; border-bottom: 0; }
.stop-btns { display: flex; gap: 15px; padding-right: 4px; }
.add { stroke-width: 3; width: 16px; height: 16px; }
.del { stroke: #c8202e; stroke-width: 3; width: 16px; height: 16px; }
.gradbar {
  position: relative;
  height: 18px;
  margin: 11px 0 15px 1px;
  width: 197px;
  border: 1px solid #c8c8c8;
  background: linear-gradient(90deg, #fbf08c, #f7f3a8 45%, #eee48c);
}
.stop {
  position: absolute;
  top: -3px;
  width: 13px;
  height: 27px;
  fill: #fbee8e;
  stroke: #bdbdbd;
}
.s0 { left: -1px; stroke: #f26a10; fill: #fbe784; }
.s1 { left: 68px; }
.s2 { right: -2px; }
.farbe { width: 100%; height: 100%; background: #fbef86; border: 1px solid #e6d978; border-radius: 4px; display: block; }
.plabel { height: 33px; line-height: 41px; }
.plabel.first { margin-top: 3px; height: 26px; line-height: 28px; }
.slider { position: relative; width: 110px; height: 6px; background: #e0e0e0; border-radius: 3px; }
.done { position: absolute; left: 0; top: 0; width: 55px; height: 6px; border-radius: 3px; background: #0a7cff; }
.knob {
  position: absolute;
  left: 48px;
  top: -4px;
  width: 14px;
  height: 14px;
  border-radius: 50%;
  background: #fff;
  border: 2px solid #5aa5f5;
}
.slider.zero .knob { left: 0; }
.red-panel {
  position: absolute;
  left: 3px;
  top: 6px;
  width: 262px;
  height: 682px;
  border: 2px solid #e81123;
  pointer-events: none;
}

/* Statusleiste */
.status {
  height: 30px;
  flex: none;
  background: #f2f3f9;
  display: flex;
  align-items: center;
  border-radius: 0 0 8px 8px;
}
.st {
  height: 22px;
  display: flex;
  align-items: center;
  border-right: 1px solid #e0e1e6;
  white-space: nowrap;
  flex: none;
}
.status .ic { width: 16px; height: 16px; stroke-width: 1.600; }
.st-panel { width: 49px; padding-left: 20px; }
.st-page { width: 130px; padding-left: 16px; }
.st-page .caret { margin-left: auto; margin-right: 14px; }
.st-add { width: 40px; justify-content: center; }
.st-cur { width: 74px; padding-left: 15px; color: #0a7cff; font-weight: 700; }
.st-right { margin-left: auto; display: flex; align-items: center; padding-right: 20px; }
.st-t { padding: 0 8px 0 9px; }
.st-focus { width: 152px; padding-left: 12px; }
.st-focus .fo { margin-left: 15px; margin-right: 8px; }
.st-focus .pl { margin-left: 14px; }
.st-zoom { width: 223px; padding-left: 8px; }
.zoom-track { position: relative; width: 96px; height: 3px; margin: 0 9px 0 8px; background: #fff; }
.zt { position: absolute; left: 0; top: 0; width: 20px; height: 3px; background: #333; }
.zk {
  position: absolute;
  left: 14px;
  top: -5px;
  width: 13px;
  height: 13px;
  border-radius: 50%;
  background: #fff;
  border: 2px solid #333;
}
.pct { margin-left: 18px; }
.st-zoom .caret { margin-left: 11px; }
.st-fit { border: 0; gap: 16px; padding-left: 12px; }
</style>
